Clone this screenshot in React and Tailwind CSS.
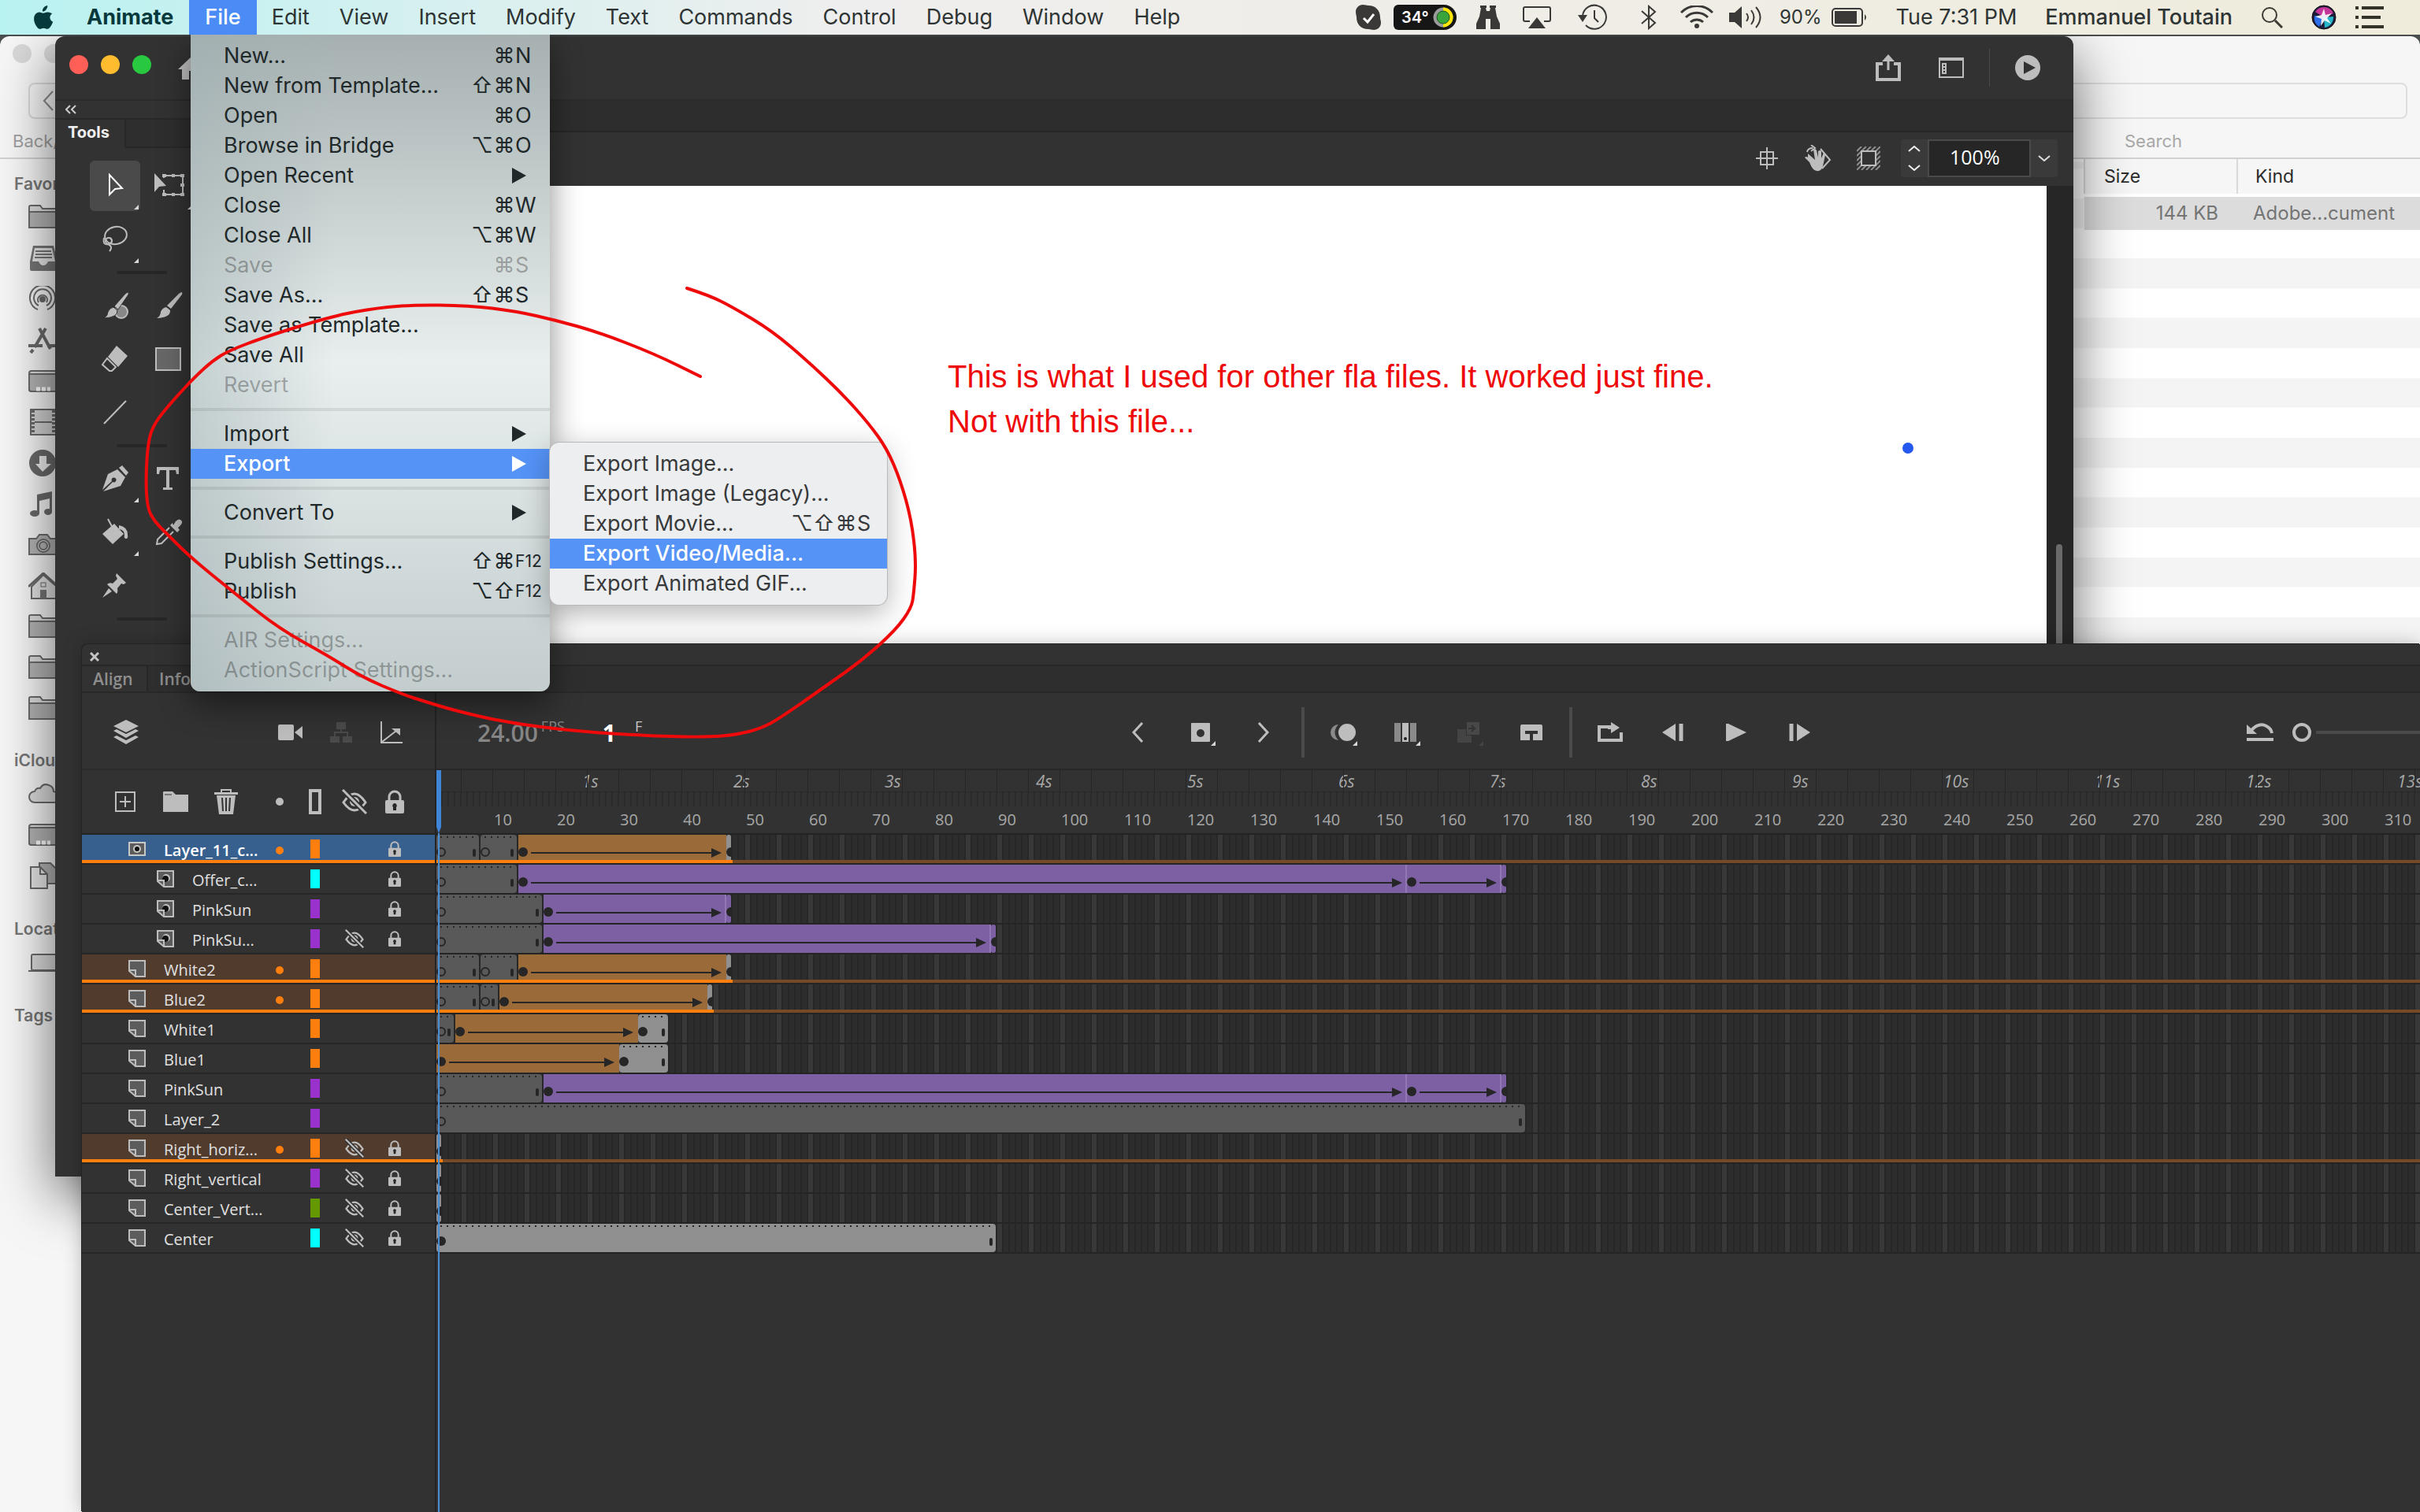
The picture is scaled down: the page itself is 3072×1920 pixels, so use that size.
import React, { useState } from 'react';
import clsx from 'clsx';

const FRAME = 8; // px per frame

const menuTitles = ['Edit', 'View', 'Insert', 'Modify', 'Text', 'Commands', 'Control', 'Debug', 'Window', 'Help'];

const fileMenu = [
  { label: 'New...', mods: '⌘', char: 'N' },
  { label: 'New from Template...', mods: '⇧⌘', char: 'N' },
  { label: 'Open', mods: '⌘', char: 'O' },
  { label: 'Browse in Bridge', mods: '⌥⌘', char: 'O' },
  { label: 'Open Recent', sub: true },
  { label: 'Close', mods: '⌘', char: 'W' },
  { label: 'Close All', mods: '⌥⌘', char: 'W' },
  { label: 'Save', mods: '⌘', char: 'S', disabled: true },
  { label: 'Save As...', mods: '⇧⌘', char: 'S' },
  { label: 'Save as Template...' },
  { label: 'Save All' },
  { label: 'Revert', disabled: true },
  null,
  { label: 'Import', sub: true },
  { label: 'Export', sub: true, active: true },
  null,
  { label: 'Convert To', sub: true },
  null,
  { label: 'Publish Settings...', mods: '⇧⌘', char: 'F12' },
  { label: 'Publish', mods: '⌥⇧', char: 'F12' },
  null,
  { label: 'AIR Settings...', disabled: true },
  { label: 'ActionScript Settings...', disabled: true },
];

const exportMenu = [
  { label: 'Export Image...' },
  { label: 'Export Image (Legacy)...' },
  { label: 'Export Movie...', mods: '⌥⇧⌘', char: 'S' },
  { label: 'Export Video/Media...', active: true },
  { label: 'Export Animated GIF...' },
];

const ORANGE = '#ff7f0e';
const PURPLE = '#9932cc';
const CYAN = '#00ffff';

// span kinds: e = empty frames, o = orange tween, p = purple tween, k = keyframe + frames, oe / pe = last key of a tween
const layers = [
  { name: 'Layer_11_c...', icon: 'mask', color: ORANGE, lock: true, dot: true, selected: true, spans: [['e', 7], ['e', 6], ['o', 33], ['oe', 1]] },
  { name: 'Offer_c...', icon: 'masked', child: true, color: CYAN, lock: true, spans: [['e', 13], ['p', 141], ['p', 15], ['pe', 1]] },
  { name: 'PinkSun', icon: 'masked', child: true, color: PURPLE, lock: true, spans: [['e', 17], ['p', 29], ['pe', 1]] },
  { name: 'PinkSu...', icon: 'masked', child: true, color: PURPLE, lock: true, hidden: true, spans: [['e', 17], ['p', 71], ['pe', 1]] },
  { name: 'White2', icon: 'page', color: ORANGE, dot: true, spans: [['e', 7], ['e', 6], ['o', 33], ['oe', 1]] },
  { name: 'Blue2', icon: 'page', color: ORANGE, dot: true, spans: [['e', 7], ['e', 3], ['o', 33], ['oe', 1]] },
  { name: 'White1', icon: 'page', color: ORANGE, spans: [['e', 3], ['o', 29], ['k', 5]] },
  { name: 'Blue1', icon: 'page', color: ORANGE, spans: [['o', 29], ['k', 8]] },
  { name: 'PinkSun', icon: 'page', color: PURPLE, spans: [['e', 17], ['p', 137], ['p', 15], ['pe', 1]] },
  { name: 'Layer_2', icon: 'page', color: PURPLE, spans: [['e', 173]] },
  { name: 'Right_horiz...', icon: 'page', color: ORANGE, dot: true, lock: true, hidden: true, spans: [['oe', 1]] },
  { name: 'Right_vertical', icon: 'page', color: PURPLE, lock: true, hidden: true, spans: [['oe', 1]] },
  { name: 'Center_Vert...', icon: 'page', color: '#669900', lock: true, hidden: true, spans: [['oe', 1]] },
  { name: 'Center', icon: 'page', color: CYAN, lock: true, hidden: true, spans: [['k', 89]] },
];

const Svg = ({ w, h, box, className, children }) => (
  <svg width={w} height={h} viewBox={box || `0 0 ${w} ${h}`} className={clsx('shrink-0', className)} fill="none" aria-hidden="true">
    {children}
  </svg>
);

const Corner = () => (
  <Svg w={6} h={6} className="absolute right-[2px] bottom-[2px]"><path d="M6 0v6H0z" fill="#d8d8d8" /></Svg>
);

/* ---------- menu bar ---------- */

const Apple = () => (
  <Svg w={26} h={32} box="0 0 26 32">
    <path d="M18.3 1c.2 2-.6 3.9-1.7 5.200-1.200 1.400-3 2.400-4.700 2.300-.2-1.900.7-3.900 1.700-5.100C14.800 2 16.800 1.100 18.300 1zM24.300 11.300c-1.900 1.200-2.900 2.900-2.900 5 0 2.500 1.500 4.600 3.800 5.500-.6 1.900-1.500 3.700-2.700 5.400-1.200 1.800-2.500 3.500-4.400 3.600-1.900 0-2.500-1.100-4.700-1.100s-2.900 1.100-4.700 1.100c-1.900.1-3.300-1.900-4.500-3.600C1.600 23.700-.2 17.400 2.300 13c1.200-2.100 3.400-3.500 5.800-3.500 1.900 0 3.600 1.300 4.700 1.300s3.200-1.500 5.400-1.300c.9 0 3.900.3 6.100 1.800z" fill="#06393c" />
  </Svg>
);

const StatusIcons = () => (
  <>
    <Svg w={32} h={32} className="mr-4">
      <path d="M9 0c3 0 5 1 7 1 9 0 15 6 15 15 0 3 1 4 1 7 0 5-4 9-9 9-3 0-4-1-7-1C7 31 1 25 1 16c0-2-1-4-1-7 0-5 4-9 9-9z" fill="#3b3938" />
      <path d="M10 17l5 5 8-10" stroke="#fff" strokeWidth="3" />
    </Svg>
    <div className="mr-6 flex h-8 w-20 items-center justify-between rounded-l-md rounded-r-2xl bg-[#161616] pr-1 pl-[10px] text-[20px] font-semibold text-white">
      34°
      <Svg w={26} h={26}>
        <circle cx="13" cy="13" r="10" stroke="#9a9a9a" strokeWidth="5" />
        <path d="M13 3a10 10 0 0 1 0 20" stroke="#ffe600" strokeWidth="5" />
        <circle cx="13" cy="13" r="8" fill="#3aa53c" stroke="#1c5a1e" />
      </Svg>
    </div>
    <Svg w={32} h={32} className="mr-7">
      <path d="M6 1h8v3h-1l1 4h4l1-4h-1V1h8v3h-1l2 11 4 9v7H19V18h-6v13H1v-7l4-9L7 4H6z" fill="#3b3938" />
    </Svg>
    <Svg w={36} h={28} className="mr-[34px]">
      <path d="M9 19H3q-2 0-2-2V3q0-2 2-2h30q2 0 2 2v14q0 2-2 2h-6" stroke="#3b3938" strokeWidth="2" />
      <path d="M18 14l11 14H7z" fill="#3b3938" />
    </Svg>
    <Svg w={38} h={34} className="mr-[42px]">
      <path d="M6 15A15 15 0 1 1 10 27" stroke="#3b3938" strokeWidth="2" />
      <path d="M0 14h12l-6 9z" fill="#3b3938" />
      <path d="M21 8v10l5 5" stroke="#3b3938" strokeWidth="2" />
    </Svg>
    <Svg w={20} h={32} className="mr-[30px]">
      <path d="M1 8l17 15-8 7V2l8 7L1 24" stroke="#3b3938" strokeWidth="2" />
    </Svg>
    <Svg w={42} h={30} className="mr-5">
      <path d="M1 9a28 28 0 0 1 40 0M7 15a20 20 0 0 1 28 0M13 21a12 12 0 0 1 16 0" stroke="#3b3938" strokeWidth="3" />
      <circle cx="21" cy="26" r="3" fill="#3b3938" />
    </Svg>
    <Svg w={44} h={32} className="mr-5">
      <path d="M0 10h7l9-8v28l-9-8H0z" fill="#3b3938" />
      <path d="M22 11q4 5 0 10M28 7q7 9 0 18M34 3q11 13 0 26" stroke="#3b3938" strokeWidth="2" />
    </Svg>
    <span className="mr-3 text-[24px]">90%</span>
    <Svg w={46} h={24} className="mr-9">
      <rect x="1" y="1" width="38" height="22" rx="4" stroke="#3b3938" strokeWidth="2" />
      <rect x="4" y="4" width="28" height="16" fill="#3b3938" />
      <path d="M42 8q4 4 0 8z" fill="#3b3938" />
    </Svg>
    <span className="mr-9">Tue 7:31 PM</span>
    <span className="mr-9 font-medium">Emmanuel Toutain</span>
    <Svg w={28} h={28} className="mr-9">
      <circle cx="11" cy="11" r="9" stroke="#3b3a33" strokeWidth="2" />
      <path d="M18 18l9 9" stroke="#3b3a33" strokeWidth="3" />
    </Svg>
    <Svg w={32} h={32} className="mr-6">
      <circle cx="16" cy="16" r="15" fill="#1d1c3b" stroke="#111" />
      <path d="M16 3a13 13 0 0 1 12 8L16 16 5 9a13 13 0 0 1 11-6z" fill="#c4369a" />
      <path d="M4 14l12 2-6 12a13 13 0 0 1-6-14z" fill="#2d6fe8" />
      <path d="M28 15a13 13 0 0 1-11 14l-1-13z" fill="#27b7c9" />
      <path d="M16 5l2 8 8-2-6 6 5 7-8-4-5 7 1-9-8-3 8-2z" fill="#fff" opacity=".9" />
    </Svg>
    <Svg w={36} h={28}>
      <path d="M0 2h4M8 2h28M0 14h4M8 14h24M0 26h4M8 26h28" stroke="#34332a" strokeWidth="4" />
    </Svg>
  </>
);

const MenuBar = () => (
  <header className="relative z-40 flex h-11 w-full items-center bg-linear-to-r from-[#b8f2f1] via-[#efeeee] via-35% to-[#efecdc] pr-[46px] pl-[42px] text-[27px] leading-[44px] text-[#2e3434]">
    <Apple />
    <button className="ml-[22px] px-5 font-bold text-[#06393c]">Animate</button>
    <button className="bg-[#4a8bf5] px-5 font-medium text-white">File</button>
    {menuTitles.map((t) => (
      <button key={t} className="px-[19px]">{t}</button>
    ))}
    <div className="ml-auto flex items-center">
      <StatusIcons />
    </div>
  </header>
);

/* ---------- drop-down menus ---------- */

const MenuItem = ({ item, charCol }) => {
  if (!item) {
    return <div className="flex h-6 items-center"><div className="h-1 w-full bg-black/8" /></div>;
  }
  return (
    <button
      disabled={item.disabled}
      className={clsx(
        'flex h-[38px] w-full items-center pl-[42px] text-left whitespace-nowrap',
        item.active && 'bg-[#5593f7] font-medium text-white',
        item.disabled && 'text-black/30'
      )}
    >
      <span className="flex-1">{item.label}</span>
      {item.mods && (
        <span className="flex">
          {item.mods.split('').map((m) => (
            <span key={m} className="w-7 text-center">{m}</span>
          ))}
        </span>
      )}
      {item.char && <span className={clsx(charCol, item.char === 'F12' && 'text-[21px]')}>{item.char}</span>}
      {item.sub && <Svg w={18} h={20} className="mr-[30px]"><path d="M0 0l18 10L0 20z" fill="currentColor" /></Svg>}
    </button>
  );
};

const FileMenu = () => (
  <div className="absolute top-11 left-[242px] z-30 w-[456px] rounded-b-xl bg-linear-to-b from-[#a6b0b0] via-[#e9efef] via-50% to-[#c3cdce] text-[27px] text-[#20282a] shadow-[0_16px_40px_rgba(0,0,0,0.45)]">
    <div className="rounded-b-xl bg-linear-to-r from-[#a0b0b2]/50 to-transparent to-40% py-2">
      {fileMenu.map((item, i) => <MenuItem key={i} item={item} charCol="w-11" />)}
    </div>
  </div>
);

const ExportMenu = () => (
  <div className="absolute top-[562px] left-[698px] z-30 w-[428px] rounded-xl bg-[#edeeef] py-2 text-[27px] text-[#37393b] shadow-[0_0_0_1px_#b9b9b9,0_10px_36px_rgba(0,0,0,0.3)]">
    {exportMenu.map((item) => <MenuItem key={item.label} item={item} charCol="w-[38px]" />)}
  </div>
);

/* ---------- Finder ---------- */

const g = { stroke: '#6b6b6b', strokeWidth: 2, fill: '#b4b4b4' };

const finderIcons = {
  folder: <><path d="M1 30V4q0-2 2-2h12l3 4h22v24z" fill="#dcdcdc" stroke="#6b6b6b" strokeWidth="2" /><path d="M1 30V10h39v20z" {...g} /></>,
  drawer: <><path d="M6 1h26l5 20v10q0 2-2 2H4q-2 0-2-2V21z" fill="#777" /><path d="M8 4h22l4 17h-9q-2 5-6 5t-6-5H5z" fill="#e8e8e8" /><path d="M9 8h20M9 12h21M8 16h22" stroke="#777" strokeWidth="2" /></>,
  airdrop: <g stroke="#6b6b6b" strokeWidth="2"><circle cx="18" cy="17" r="3" fill="#6b6b6b" /><path d="M12 30a16 16 0 1 1 12 0M13 25a11 11 0 1 1 10 0" /><path d="M13 21a6 6 0 1 1 10 0" /></g>,
  apps: <g stroke="#6b6b6b" strokeWidth="4"><path d="M22 2L8 26M14 2l14 26M0 24h18M24 24h12M6 29l-3 4" /></g>,
  disk: <><rect x="1" y="4" width="40" height="26" rx="3" fill="#dcdcdc" stroke="#6b6b6b" strokeWidth="2" /><path d="M1 8h40v19q0 3-3 3H4q-3 0-3-3z" {...g} /><path d="M10 27h18" stroke="#fff" strokeWidth="5" strokeDasharray="5 2" /></>,
  movie: <><rect x="3" y="1" width="34" height="32" fill="#d2d2d2" stroke="#6b6b6b" strokeWidth="2" /><path d="M6 2v30M32 2v30" stroke="#6b6b6b" strokeWidth="4" strokeDasharray="3 2" /><path d="M8 17h22" stroke="#6b6b6b" strokeWidth="2" /></>,
  down: <><circle cx="18" cy="17" r="17" fill="#6b6b6b" /><path d="M14 8h9v10h6L18 28 9 18h5z" fill="#eee" /></>,
  music: <><path d="M11 5l19-4v26h-3V10l-13 3v16h-3z" fill="#6b6b6b" /><ellipse cx="8" cy="29" rx="6" ry="4" fill="#6b6b6b" /><ellipse cx="25" cy="27" rx="5" ry="4" fill="#6b6b6b" /></>,
  camera: <><path d="M1 9h9l4-5h10l4 5h12v20H1z" {...g} /><circle cx="19" cy="18" r="8" fill="#ddd" stroke="#6b6b6b" strokeWidth="2" /><circle cx="19" cy="18" r="5" {...g} /></>,
  house: <><path d="M4 18v15h32V18L19 3z" fill="#e2e2e2" stroke="#6b6b6b" strokeWidth="2" /><path d="M0 18L19 1l19 17" stroke="#6b6b6b" strokeWidth="3" /><rect x="15" y="22" width="8" height="11" fill="#777" /><rect x="16" y="13" width="6" height="5" stroke="#6b6b6b" /></>,
  cloud: <path d="M8 28a7 7 0 0 1 0-14q2-5 7-4Q19 3 26 6q6 2 6 8 8 2 8 8t-8 6z" fill="#dcdcdc" stroke="#6b6b6b" strokeWidth="2" />,
  docs: <><path d="M14 1h14l8 8v18H14z" {...g} /><path d="M3 6h12l9 9v18H3z" fill="#e6e6e6" stroke="#6b6b6b" strokeWidth="2" /><path d="M15 6v9h9" stroke="#6b6b6b" strokeWidth="2" /></>,
  laptop: <><rect x="4" y="7" width="36" height="20" rx="2" fill="#dcdcdc" stroke="#6b6b6b" strokeWidth="2" /><path d="M0 28h42" stroke="#6b6b6b" strokeWidth="2" /></>,
};

const favorites = ['folder', 'drawer', 'airdrop', 'apps', 'disk', 'movie', 'down', 'music', 'camera', 'house', 'folder', 'folder', 'folder'];

const SideIcons = ({ names }) => names.map((n, i) => (
  <div key={i} className="flex h-[52px] items-center pl-9">
    <Svg w={42} h={34}>{finderIcons[n]}</Svg>
  </div>
));

const SideLabel = ({ children }) => (
  <div className="h-8 pl-[18px] text-[21px] leading-8 font-semibold whitespace-nowrap text-[#767676]">{children}</div>
);

const Finder = () => (
  <section className="absolute inset-x-0 top-[46px] bottom-0 flex flex-col overflow-hidden rounded-t-xl bg-[#f6f6f6]">
    <div className="flex h-[156px] shrink-0 justify-between border-b-2 border-[#d2d2d2]">
      <div className="flex flex-col pl-4">
        <div className="flex gap-4 pt-[10px]">
          <span className="h-6 w-6 rounded-full bg-[#d8d8d8]" />
          <span className="h-6 w-6 rounded-full bg-[#d8d8d8]" />
        </div>
        <button aria-label="Back" className="mt-[25px] ml-5 flex h-[46px] w-20 items-center rounded-lg border-2 border-[#d9d9d9] pl-4">
          <Svg w={14} h={26}><path d="M13 1L2 13l11 12" stroke="#8a8a8a" strokeWidth="2" /></Svg>
        </button>
        <span className="mt-3 text-[22px] leading-8 text-[#a0a0a0]">Back/</span>
      </div>
      <div className="flex w-[640px] flex-col pt-[59px] pr-4">
        <input aria-label="Search" className="h-[46px] w-full rounded-lg border-2 border-[#dedede] bg-[#f6f6f6]" />
        <span className="mt-3 pl-[265px] text-[22px] leading-8 text-[#a8a8a8]">Search</span>
      </div>
    </div>
    <div className="flex min-h-0 flex-1">
      <aside className="w-[300px] pt-4">
        <SideLabel>Favorites</SideLabel>
        <SideIcons names={favorites} />
        <div className="pt-6"><SideLabel>iCloud</SideLabel></div>
        <SideIcons names={['cloud', 'disk', 'docs']} />
        <div className="pt-[26px]"><SideLabel>Locations</SideLabel></div>
        <SideIcons names={['laptop']} />
        <div className="pt-[26px]"><SideLabel>Tags</SideLabel></div>
      </aside>
      <div className="flex-1 bg-[repeating-linear-gradient(180deg,#fff_0_38px,#f4f4f4_38px_76px)] bg-[position:0_12px]">
        <table className="ml-auto w-[427px] table-fixed border-collapse bg-[#f6f6f6] text-[23px]">
          <thead>
            <tr className="h-[46px] border-b-2 border-[#d2d2d2] text-left text-[#2c2c2c]">
              <th className="w-[194px] border-l-2 border-[#d9d9d9] pl-6 font-normal">Size</th>
              <th className="border-l-2 border-[#d9d9d9] pl-[22px] font-normal">Kind</th>
            </tr>
          </thead>
          <tbody>
            <tr className="h-11 border-t-4 border-white bg-[#dcdcdc] text-[24px] text-[#747474]">
              <td className="pr-6 text-right">144 KB</td>
              <td className="pl-5">Adobe...cument</td>
            </tr>
          </tbody>
        </table>
      </div>
    </div>
  </section>
);

/* ---------- Animate main window ---------- */

const C = '#bdbdbd';

const toolIcons = {
  select: <path d="M11 4v25l7-7 9-1z" stroke="#fff" strokeWidth="2" />,
  transform: <><path d="M0 2v24l6-7 9-1z" fill={C} /><path d="M12 8V5h24v24H12v-6" stroke={C} strokeWidth="2" /><path d="M10 3h5v4h-5zM22 3h4v4h-4zM33 3h5v4h-5zM33 15h5v4h-5zM33 27h5v4h-5zM22 27h4v4h-4zM10 27h5v4h-5z" fill={C} /></>,
  lasso: <g stroke={C} strokeWidth="2"><ellipse cx="19" cy="13" rx="14" ry="11" transform="rotate(-12 19 13)" /><circle cx="10" cy="20" r="4" /><path d="M4 16q-2 10 6 8 7-3 2-8M9 24q7 3 2 9" /></g>,
  brush: <><circle cx="26" cy="26" r="8" fill="#888" stroke={C} strokeWidth="2" /><path d="M34 1q2 0 1 3L22 23l-5-4L31 3zM16 20l5 4q1 9-17 10 5-3 5-8 2-5 7-6z" fill={C} stroke="#323232" /></>,
  paint: <path d="M34 1q2 0 1 3L21 22l-5-4L31 3zM15 20l5 4q1 9-17 10 5-3 5-8 2-5 7-6z" fill={C} />,
  eraser: <><path d="M20 1l14 13-12 14L9 15z" fill={C} /><path d="M8 17l11 11-5 5h-3l-9-8z" stroke={C} strokeWidth="2" /></>,
  rect: <rect x="2" y="4" width="31" height="28" fill="#686868" stroke={C} strokeWidth="2" />,
  line: <path d="M4 32L32 3" stroke={C} strokeWidth="2" />,
  pen: <><path d="M21 6l10 10-6 11L3 34 15 22a3 3 0 1 0-1-1L2 32 9 12z" fill={C} /><path d="M23 4l4-3 8 9-3 4z" fill={C} /></>,
  text: <path d="M3 3h28v9h-3l-1-5h-8v22h4v3H11v-3h4V7H7l-1 5H3z" fill={C} />,
  bucket: <><path d="M17 7l12 13-14 13L2 20z" fill={C} /><path d="M9 1l8 15" stroke={C} strokeWidth="2" /><path d="M23 9q11 2 11 12 1 5-2 5t-2-5q0-6-7-7z" fill={C} /></>,
  dropper: <><path d="M24 9l3-5q5-5 8 0 1 3-5 8l2 3-3 3-9-9 3-3z" fill={C} /><path d="M19 12L4 27l-1 6 6-1 15-15" stroke={C} strokeWidth="2" /></>,
  pin: <><path d="M20 2l12 12-3 2-3-1-5 6q1 5-1 7L8 16q3-3 7-1l6-6-2-4zM10 21l4 4-12 8z" fill={C} /></>,
  hand: <path d="M8 34V20M14 34V17M20 34V17M26 34V20" stroke={C} strokeWidth="3" />,
  zoom: <circle cx="17" cy="27" r="13" stroke={C} strokeWidth="2" />,
};

const toolRows = [
  ['select', 'transform'], ['lasso'], null,
  ['brush', 'paint'], ['eraser', 'rect'], ['line'], null,
  ['pen', 'text'], ['bucket', 'dropper'], ['pin'], null,
  ['hand', 'zoom'],
];
const withCorner = ['select', 'transform', 'lasso', 'rect', 'pen', 'bucket'];

const ToolsPanel = () => (
  <aside className="flex w-[302px] flex-col">
    <div className="h-6 border-b-2 border-[#282828] pl-[13px]">
      <Svg w={14} h={22}><path d="M6 6l-5 5 5 5M13 6l-5 5 5 5" stroke="#ccc" strokeWidth="2" /></Svg>
    </div>
    <div className="flex h-9 text-[20px] leading-8 font-bold text-[#f0f0f0]">
      <span className="w-[88px] pl-4">Tools</span>
      <span className="flex-1 border-b-2 border-l-2 border-[#282828] bg-[#2e2e2e]" />
    </div>
    <div className="pt-[14px] pl-[42px]">
      {toolRows.map((row, i) => (
        row ? (
          <div key={i} className="flex h-[68px]">
            {row.map((t) => (
              <button key={t} aria-label={t} className={clsx('relative m-[2px] flex h-16 w-16 items-center justify-center rounded-md', t === 'select' && 'bg-[#4a4a4a]')}>
                <Svg w={36} h={36} box="0 0 36 36" className="overflow-visible">{toolIcons[t]}</Svg>
                {withCorner.includes(t) && <Corner />}
              </button>
            ))}
          </div>
        ) : (
          <div key={i} className="flex h-4 items-center pl-9"><span className="h-1 w-16 rounded-full bg-[#272727]" /></div>
        )
      ))}
    </div>
  </aside>
);

const AnimateWindow = () => {
  const [zoom, setZoom] = useState('100%');
  return (
    <section className="absolute top-[46px] right-[440px] left-[70px] flex h-[1448px] flex-col overflow-hidden rounded-t-xl bg-[#323232]">
      <div className="flex h-[82px] shrink-0 items-center border-b-2 border-[#2a2a2a] pl-[18px]">
        <div className="flex gap-4 pb-2">
          <span className="h-6 w-6 rounded-full bg-[#ff5f57]" />
          <span className="h-6 w-6 rounded-full bg-[#febc2e]" />
          <span className="h-6 w-6 rounded-full bg-[#28c840]" />
        </div>
        <Svg w={36} h={32} className="ml-[34px]"><path d="M18 1l18 17h-5v13h-9V20h-8v11H5V18H0z" fill={C} /></Svg>
        <div className="ml-auto flex items-center pr-[42px]">
          <button aria-label="Share" className="mr-12">
            <Svg w={32} h={34}><path d="M9 12H2v20h28V12h-7" stroke={C} strokeWidth="4" /><path d="M16 20V6" stroke={C} strokeWidth="3" /><path d="M16 0l8 9H8z" fill={C} /></Svg>
          </button>
          <button aria-label="Workspace" className="mr-8">
            <Svg w={32} h={26}><path d="M1 2h30v23H1z" stroke={C} strokeWidth="2" /><path d="M0 2h32" stroke={C} strokeWidth="4" /><path d="M4 7h6v14H4z" fill={C} /><path d="M7 9v10" stroke="#323232" strokeWidth="2" strokeDasharray="2 2" /></Svg>
          </button>
          <span className="mr-8 h-12 w-px bg-[#4a4a4a]" />
          <button aria-label="Test movie">
            <Svg w={32} h={32}><circle cx="16" cy="16" r="16" fill={C} /><path d="M11 8l15 8-15 8z" fill="#323232" /></Svg>
          </button>
        </div>
      </div>
      <div className="flex min-h-0 flex-1">
        <ToolsPanel />
        <div className="flex min-w-0 flex-1 flex-col">
          <div className="h-10 border-b-2 border-[#262626] bg-[#2d2d2d]" />
          <div className="flex h-[68px] items-center justify-end pr-5 pb-[2px] text-white">
            <button aria-label="Center stage" className="mr-[34px]">
              <Svg w={28} h={28}><path d="M14 0v28M0 14h28" stroke={C} strokeWidth="2" /><rect x="6" y="6" width="16" height="16" stroke={C} strokeWidth="2" /></Svg>
            </button>
            <button aria-label="Rotate stage" className="mr-8">
              <Svg w={34} h={34}><path d="M4 11l9 8-2-13q3-2 4 1l2 9V8q3-2 4 0v9l3-7q3 0 2 3l-3 14q-2 7-8 6-5 0-9-11L0 16q2-2 4 0z" fill={C} /><path d="M20 5l12 14-10 11" stroke={C} strokeWidth="2" /><path d="M3 9q1-5 7-5M8 0l5 4-5 4" stroke={C} strokeWidth="2" /></Svg>
            </button>
            <button aria-label="Clip content" className="mr-[26px]">
              <Svg w={30} h={30}>
                <path d="M0 6l6-6M0 12L12 0M0 18L18 0M0 24L24 0M0 30L30 0M6 30L30 6M12 30l18-18M18 30l12-12M24 30l6-6" stroke="#8e8e8e" strokeWidth="2" />
                <rect x="6" y="6" width="18" height="18" fill="#323232" stroke={C} strokeWidth="2" />
              </Svg>
            </button>
            <div className="flex h-12 items-center rounded-sm bg-[#3a3a3a]">
              <div className="flex h-full w-[34px] flex-col items-center justify-between py-2">
                <button aria-label="Zoom in"><Svg w={16} h={8}><path d="M1 7l7-6 7 6" stroke="#eee" strokeWidth="2" /></Svg></button>
                <button aria-label="Zoom out"><Svg w={16} h={8}><path d="M1 1l7 6 7-6" stroke="#eee" strokeWidth="2" /></Svg></button>
              </div>
              <input aria-label="Zoom" value={zoom} onChange={(e) => setZoom(e.target.value)} className="h-12 w-[131px] border-2 border-[#4a4a4a] bg-[#262626] pb-1 pl-[26px] font-['Open_Sans',sans-serif] text-[25px] font-medium" />
              <button aria-label="Zoom presets" className="flex w-[34px] justify-center"><Svg w={16} h={8}><path d="M1 1l7 6 7-6" stroke="#ddd" strokeWidth="2" /></Svg></button>
            </div>
          </div>
          <div className="flex flex-1 bg-[#262626]">
            <div className="flex-1 bg-white pt-[214px] pl-[831px] font-['Liberation_Sans',Arial,sans-serif] text-[40px] leading-[57px] whitespace-nowrap text-[#ee0a0a]">
              <p>This is what I used for other fla files. It worked just fine.</p>
              <p>Not with this file...</p>
            </div>
            <div className="w-[34px] pt-[455px] pl-3"><div className="h-80 w-2 rounded-full bg-[#6a6a6a]" /></div>
          </div>
        </div>
      </div>
    </section>
  );
};

/* ---------- timeline ---------- */

const EyeOff = ({ size }) => (
  <Svg w={size} h={size} box="0 0 32 32">
    <path d="M2 17Q9 6 16 6t14 11Q23 27 16 27T2 17z" stroke={C} strokeWidth="3" />
    <circle cx="16" cy="16" r="6" fill={C} />
    <path d="M1 1l30 30" stroke="#323232" strokeWidth="7" />
    <path d="M1 1l30 30" stroke={C} strokeWidth="3" />
  </Svg>
);

const Lock = ({ w, h }) => (
  <Svg w={w} h={h} box="0 0 24 30">
    <path d="M5 14V9a7 7 0 0 1 14 0v5" stroke={C} strokeWidth="3" />
    <rect y="13" width="24" height="17" rx="2" fill={C} />
    <path d="M12 17a3 3 0 0 1 2 5v4h-4v-4a3 3 0 0 1 2-5z" fill="#262626" />
  </Svg>
);

const LayerIcon = ({ kind }) => (
  <Svg w={22} h={22}>
    {kind === 'mask' && <><rect x="1" y="3" width="20" height="16" fill="#5c5c5c" stroke="#c8c8c8" strokeWidth="2" /><circle cx="11" cy="11" r="5" fill="#c8c8c8" /><circle cx="11" cy="11" r="3" fill="#111" /></>}
    {kind === 'page' && <><path d="M1 1h20v20H9L1 14z" fill="#5c5c5c" stroke={C} strokeWidth="2" /><path d="M1 13h8v8" stroke={C} strokeWidth="2" /></>}
    {kind === 'masked' && <><path d="M1 1h20v20H9L1 14z" fill="#5c5c5c" stroke={C} strokeWidth="2" /><circle cx="12" cy="10" r="5" fill={C} /><circle cx="11" cy="11" r="4" fill="#111" /><path d="M1 13h8v8" stroke={C} strokeWidth="2" /></>}
  </Svg>
);

const spanStyle = {
  e: 'bg-[#595959]',
  o: 'bg-[#9a6a39]',
  p: 'bg-[#7d5fa3]',
  k: 'bg-[#909090]',
  oe: 'bg-[#909090]',
  pe: 'bg-[#7d5fa3]',
};

const Span = ({ kind, frames, next }) => {
  const full = frames * FRAME;
  const tween = kind === 'o' || kind === 'p';
  const w = tween && next ? full : full - 2;
  return (
    <div className={clsx('h-9 shrink-0 overflow-hidden', spanStyle[kind], !tween && 'rounded-sm', kind === 'p' && 'border-r-2 border-[#9177b3]')} style={{ width: w, marginRight: full - w }}>
      <svg width={w} height="36" fill="none" aria-hidden="true">
        {(kind === 'e' || kind === 'k') && <path d={`M5 3H${w - 2}`} stroke="#262626" strokeWidth="2" strokeDasharray="2 6" />}
        {kind === 'e' && <circle cx="6" cy="22" r="5" stroke="#262626" strokeWidth="2" />}
        {kind !== 'e' && <circle cx="6" cy="22" r="6" fill="#262626" />}
        {(kind === 'e' || kind === 'k') && <rect x={w - 8} y="18" width="4" height="10" rx="2" fill="#262626" />}
        {tween && <path d={`M16 23H${full - 19}`} stroke="#262626" strokeWidth="2" />}
        {tween && <path d={`M${full - 19} 17l13 6-13 6z`} fill="#262626" />}
      </svg>
    </div>
  );
};

const LayerRow = ({ layer }) => (
  <div
    className={clsx(
      'flex h-[38px] items-center border-b-2 border-[#262626] text-[20px]',
      layer.selected ? 'bg-[#37608f] font-semibold text-white' : layer.dot ? 'bg-[#503b2d] font-medium text-[#e0e0e0]' : 'font-medium text-[#e0e0e0]',
      layer.dot && 'shadow-[inset_0_-4px_0_#ff7f0e]'
    )}
  >
    <div className={clsx('flex w-[229px] items-center gap-[23px] whitespace-nowrap', layer.child ? 'pl-[95px]' : 'pl-[59px]')}>
      <LayerIcon kind={layer.icon} />
      <span className="pt-1">{layer.name}</span>
    </div>
    <div className="flex w-11 justify-center pt-1">{layer.dot && <span className="h-[10px] w-[10px] rounded-full bg-[#ff7f0e]" />}</div>
    <div className="flex w-[46px] justify-center"><span className="h-6 w-3" style={{ backgroundColor: layer.color }} /></div>
    <div className="flex w-[54px] justify-center">{layer.hidden && <EyeOff size={24} />}</div>
    <div className="flex w-12 justify-center">{layer.lock && <Lock w={16} h={20} />}</div>
  </div>
);

const FrameRow = ({ layer }) => {
  const total = layer.spans.reduce((n, s) => n + s[1], 0) * FRAME;
  return (
    <div className="relative h-[38px] overflow-hidden border-b-2 border-[#242424] bg-[repeating-linear-gradient(90deg,transparent_0_32px,#383838_32px_38px,transparent_38px_40px),repeating-linear-gradient(90deg,#2d2d2d_0_6px,#272727_6px_8px)]">
      <div className="flex">
        {layer.spans.map(([kind, frames], i) => (
          <Span key={i} kind={kind} frames={frames} next={layer.spans[i + 1]} />
        ))}
      </div>
      {layer.dot && (
        <div className="absolute inset-x-0 bottom-0 flex h-1">
          <span className="bg-[#ff7f0e]" style={{ width: total }} />
          <span className="flex-1 bg-[#774a27]" />
        </div>
      )}
    </div>
  );
};

const tb = 'relative flex h-16 w-20 shrink-0 items-center justify-center';
const MiniCorner = ({ color = '#d8d8d8' }) => (
  <Svg w={6} h={6} className="absolute right-[21px] bottom-[15px]"><path d="M6 0v6H0z" fill={color} /></Svg>
);

const TransportBar = () => (
  <div className="flex h-[98px] items-center overflow-hidden border-b-2 border-[#282828] pt-1 text-[#868686]">
    <div className="flex w-[850px] shrink-0 items-center pl-[52px] text-[30px] font-semibold">
      <span>24.00</span>
      <span className="ml-1 pb-4 text-[18px] font-normal">FPS</span>
      <span className="ml-12 font-bold text-white">1</span>
      <span className="ml-6 pb-4 text-[18px] font-normal text-[#c8c8c8]">F</span>
    </div>
    <button aria-label="Previous keyframe" className={tb}><Svg w={16} h={26}><path d="M14 1L3 13l11 12" stroke={C} strokeWidth="3" /></Svg></button>
    <button aria-label="Insert keyframe" className={tb}><Svg w={24} h={24}><rect width="24" height="24" rx="1" fill={C} /><circle cx="12" cy="13" r="5" fill="#323232" /></Svg><MiniCorner /></button>
    <button aria-label="Next keyframe" className={tb}><Svg w={16} h={26}><path d="M2 1l11 12L2 25" stroke={C} strokeWidth="3" /></Svg></button>
    <span className="mx-2 h-16 w-1 shrink-0 bg-[#4a4a4a]" />
    <button aria-label="Onion skin" className={tb}><Svg w={34} h={22}><path d="M12 1a10 10 0 1 0 0 20q-9-10 0-20z" fill="#8a8a8a" /><circle cx="23" cy="11" r="11" fill={C} /></Svg><MiniCorner /></button>
    <button aria-label="Edit multiple frames" className={tb}><Svg w={28} h={24}><path d="M0 0h8v24H0zM20 0h8v24h-8z" fill="#8a8a8a" /><path d="M10 0h8v24h-8z" fill={C} /><circle cx="14" cy="20" r="2" fill="#222" /></Svg><MiniCorner /></button>
    <button aria-label="Create tween" className={tb} disabled><Svg w={28} h={28}><path d="M12 1h16v16H12z" fill="#484848" /><path d="M0 10h11v8h7v9H0z" fill="#444" /><path d="M14 9h6M18 5l4 4-4 4" stroke="#333" strokeWidth="2" /></Svg><MiniCorner color="#444" /></button>
    <button aria-label="Frame settings" className={tb}><Svg w={28} h={20}><path d="M2 0h24q2 0 2 2v18H16v-8h6V8H6v4h6v8H0V2q0-2 2-2z" fill={C} /></Svg></button>
    <span className="mx-2 h-16 w-1 shrink-0 bg-[#4a4a4a]" />
    <button aria-label="Loop" className={tb}><Svg w={34} h={26}><path d="M14 6H3v17h28V13" stroke={C} strokeWidth="4" /><path d="M14 4h4V0l11 7-11 7V9h-4z" fill={C} /></Svg></button>
    <button aria-label="Step back" className={tb}><Svg w={28} h={22}><path d="M17 0v22L0 11z" fill={C} /><path d="M24 0v22" stroke={C} strokeWidth="5" /></Svg></button>
    <button aria-label="Play" className={tb}><Svg w={26} h={22}><path d="M0 0h3l23 11L3 22H0z" fill={C} /></Svg></button>
    <button aria-label="Step forward" className={tb}><Svg w={28} h={22}><path d="M11 0v22l17-11z" fill={C} /><path d="M4 0v22" stroke={C} strokeWidth="5" /></Svg></button>
    <button aria-label="Reset zoom" className="mr-6 ml-auto"><Svg w={34} h={24}><path d="M6 9q10-10 19-5 6 3 7 9" stroke={C} strokeWidth="4" /><path d="M0 2v12h13z" fill={C} /><path d="M0 21h34" stroke={C} strokeWidth="4" /></Svg></button>
    <input
      type="range"
      aria-label="Timeline zoom"
      defaultValue={0}
      className="h-6 w-[162px] shrink-0 appearance-none bg-[linear-gradient(#4a4a4a,#4a4a4a)] bg-[length:132px_4px] bg-right bg-no-repeat [&::-webkit-slider-thumb]:h-6 [&::-webkit-slider-thumb]:w-6 [&::-webkit-slider-thumb]:appearance-none [&::-webkit-slider-thumb]:rounded-full [&::-webkit-slider-thumb]:border-4 [&::-webkit-slider-thumb]:border-[#bdbdbd] [&::-webkit-slider-thumb]:bg-[#323232]"
    />
  </div>
);

const Ruler = () => (
  <div className="flex h-[82px] flex-col overflow-hidden border-b-2 border-[#242424] text-[20px] text-[#a8a8a8]">
    <div className="relative h-7 shrink-0 border-b border-[#292929] pl-[185px]">
      <div className="flex text-[21px] leading-7 font-medium italic">
        {Array.from({ length: 13 }, (_, i) => <span key={i} className="w-48 shrink-0">{i + 1}s</span>)}
      </div>
      <div className="absolute inset-0 bg-[repeating-linear-gradient(90deg,transparent_0_31px,#262626_31px_32px,transparent_32px_40px)]" />
    </div>
    <div className="h-[18px] shrink-0 bg-[repeating-linear-gradient(90deg,#323232_0_6px,#2a2a2a_6px_8px)]" />
    <div className="flex pl-[73px] leading-[34px] font-medium">
      {Array.from({ length: 31 }, (_, i) => <span key={i} className="w-20 shrink-0">{(i + 1) * 10}</span>)}
    </div>
  </div>
);

const small = 'flex h-16 w-16 items-center justify-center';

const TimelineWindow = () => (
  <section className="absolute top-[818px] right-0 bottom-0 left-[104px] z-20 flex flex-col overflow-hidden rounded-tl-lg bg-[#323232] font-['Open_Sans','Noto_Sans',sans-serif] shadow-[-1px_-1px_0_#232323,0_0_24px_rgba(0,0,0,0.25)]">
    <div className="flex h-7 shrink-0 items-center border-b-2 border-[#282828] pt-[6px] pl-[10px]">
      <button aria-label="Close panel"><Svg w={12} h={12}><path d="M1 1l10 10M11 1L1 11" stroke="#c4c4c4" strokeWidth="3" /></Svg></button>
    </div>
    <div className="flex h-[34px] shrink-0 border-b-2 border-[#282828] bg-[#2e2e2e] text-[21px] leading-8 font-semibold text-[#8e8e8e]">
      <button className="w-[84px] border-r-2 border-[#282828] bg-[#323232] pl-[14px] text-left">Align</button>
      <button className="w-20 pl-[14px] text-left">Info</button>
    </div>
    <div className="flex min-h-0 flex-1">
      <div className="w-[450px] shrink-0 border-r-2 border-[#242424]">
        <div className="flex h-[98px] items-center border-b-2 border-[#2a2a2a] pt-1 pl-6">
          <button aria-label="Layer depth" className={clsx(small, 'mr-[145px]')}>
            <Svg w={32} h={32}><path d="M16 0l16 8-16 8L0 8z" fill={C} /><path d="M0 14l4-2 12 6 12-6 4 2-16 9zM0 22l4-2 12 6 12-6 4 2-16 9z" fill={C} /></Svg>
          </button>
          <button aria-label="Camera" className={small}><Svg w={32} h={20}><rect width="20" height="20" rx="2" fill={C} /><path d="M21 10L31 2v16z" fill={C} /></Svg></button>
          <button aria-label="Parenting" className={small} disabled><Svg w={28} h={26}><path d="M8 0h12v9H8zM0 18h12v8H0zM16 18h12v8H16z" fill="#4a4a4a" /><path d="M14 8v5M6 18v-5h16v5" stroke="#4a4a4a" strokeWidth="2" /></Svg></button>
          <button aria-label="Graph" className={small}><Svg w={28} h={28}><path d="M1 0v27h27M2 26L20 12" stroke={C} strokeWidth="2" /><path d="M14 9h11v9z" fill={C} /></Svg></button>
        </div>
        <div className="flex h-[82px] items-center border-b-2 border-[#242424] pl-[23px]">
          <button aria-label="New layer" className={small}><Svg w={26} h={26}><path d="M1 1h24v24H1zM13 6v14M6 13h14" stroke={C} strokeWidth="2" /></Svg></button>
          <button aria-label="New folder" className={small}><Svg w={32} h={26}><path d="M0 1q0-1 1-1h11l4 4h16v22H0z" fill={C} /><path d="M2 4h9" stroke="#323232" /></Svg></button>
          <button aria-label="Delete layer" className={clsx(small, 'mr-[14px]')}><Svg w={30} h={32}><path d="M0 4h30v3H0zM3 8h24l-3 24H6z" fill={C} /><path d="M9 4V1h12v3" stroke={C} strokeWidth="2" /><path d="M10 11l1 17M15 11v17M20 11l-1 17" stroke="#323232" strokeWidth="2" /></Svg></button>
          <div className="flex w-11 justify-center"><span className="h-[10px] w-[10px] rounded-full bg-[#bdbdbd]" /></div>
          <div className="flex w-[46px] justify-center"><span className="h-8 w-4 border-4 border-[#bdbdbd]" /></div>
          <div className="flex w-[54px] justify-center"><EyeOff size={32} /></div>
          <div className="flex w-12 justify-center"><Lock w={24} h={30} /></div>
        </div>
        {layers.map((l, i) => <LayerRow key={i} layer={l} />)}
      </div>
      <div className="flex min-w-0 flex-1 flex-col">
        <TransportBar />
        <div className="relative min-h-0 flex-1">
          <Ruler />
          {layers.map((l, i) => <FrameRow key={i} layer={l} />)}
          {/* playhead */}
          <div className="absolute top-0 left-0 flex h-full w-[6px] flex-col items-center">
            <Svg w={6} h={80}><path d="M0 0h6v72l-3 8-3-8z" fill="#3f85d8" /></Svg>
            <span className="w-[2px] flex-1 bg-[#4a90d9]" />
          </div>
        </div>
      </div>
    </div>
  </section>
);

/* ---------- red marker stroke ---------- */

const strokePoints = [
  [872, 366], [900, 375], [930, 390], [980, 420], [1028, 461], [1070, 501], [1103, 538], [1126, 570], [1143, 610], [1157, 660], [1163, 713],
  [1160, 753], [1157, 772], [1137, 800], [1095, 838], [1050, 870], [990, 912], [966, 925], [935, 933], [898, 936], [837, 935], [733, 929],
  [641, 917], [580, 903], [543, 892], [509, 881], [460, 860], [417, 833], [354, 798], [300, 755], [242, 708], [210, 676], [196, 662], [187, 645],
  [185, 607], [188, 560], [196, 537], [220, 508], [248, 478], [270, 458], [291, 445], [339, 427], [417, 403], [465, 393], [519, 387], [596, 388],
  [654, 395], [707, 407], [760, 422], [830, 449], [889, 478],
];

const smooth = (pts) => {
  let d = `M${pts[0][0]} ${pts[0][1]}`;
  for (let i = 1; i < pts.length - 1; i++) {
    const [x, y] = pts[i];
    const [nx, ny] = pts[i + 1];
    d += `Q${x} ${y} ${(x + nx) / 2} ${(y + ny) / 2}`;
  }
  return `${d}L${pts[pts.length - 1].join(' ')}`;
};

const App = () => (
  <main className="relative h-screen w-full overflow-hidden bg-[#4a4e4e] font-['Inter',sans-serif]">
    <MenuBar />
    <Finder />
    <div className="absolute top-[46px] right-[440px] left-[70px] h-[1448px] rounded-t-xl shadow-[0_24px_72px_rgba(0,0,0,0.6)]" />
    <AnimateWindow />
    <TimelineWindow />
    <FileMenu />
    <ExportMenu />
    <svg className="pointer-events-none absolute top-0 left-0 z-50 h-[960px] w-[2500px]" viewBox="0 0 2500 960" fill="none" aria-hidden="true">
      <path d={smooth(strokePoints)} stroke="#ee0a0a" strokeWidth="4" strokeLinecap="round" />
      <circle cx="2422" cy="569" r="7" fill="#2458ee" />
    </svg>
  </main>
);

export default App;
